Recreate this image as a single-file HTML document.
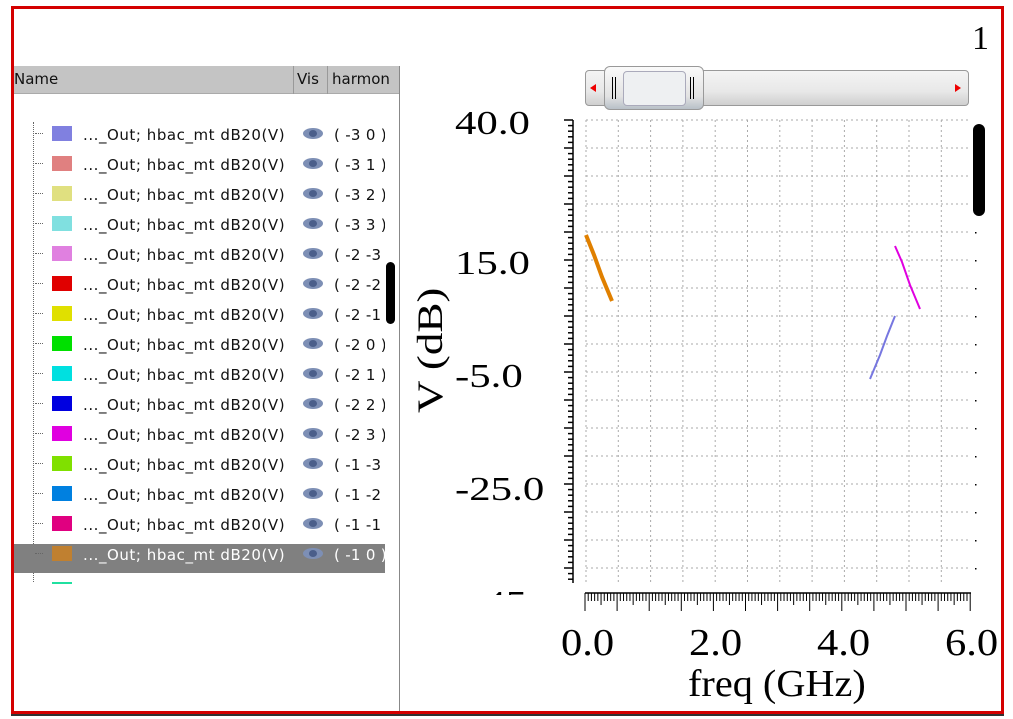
<!DOCTYPE html>
<html><head><meta charset="utf-8"><style>
*{margin:0;padding:0;box-sizing:border-box}
body{width:1013px;height:719px;background:#fff;position:relative;overflow:hidden;font-family:"DejaVu Sans","Liberation Sans",sans-serif}
.frame{position:absolute;left:11px;top:6px;width:993px;height:708px;border:3px solid #d40000;box-shadow:0 2px 0 #333}
.abs{position:absolute}
.hdr{position:absolute;left:14px;top:66px;width:385px;height:28px;background:#c4c4c4;border-bottom:1px solid #aaa;font-size:15px;color:#111}
.row{position:absolute;left:14px;width:371px;height:30px;font-size:15px;color:#111;overflow:hidden}
.sw{position:absolute;left:38px;top:7px;width:20px;height:15px}
.lb{position:absolute;left:69px;top:7px;white-space:nowrap;letter-spacing:0.55px}
.eye{position:absolute;left:289px;top:9px;width:20px;height:11px;border-radius:50%;background:#7d8fb5}
.eye:after{content:"";position:absolute;left:6px;top:2px;width:8px;height:7px;border-radius:50%;background:#4a5e8a}
.hv{position:absolute;left:320px;top:7px;white-space:nowrap;letter-spacing:0.3px}
.serif{font-family:"Liberation Serif","DejaVu Serif",serif;color:#000;position:absolute;transform-origin:left top;white-space:nowrap}
.yl{font-size:34px;transform:scaleX(1.26)}
.xl{font-size:38px;transform:scaleX(1.12)}
</style></head><body>
<div class="frame"></div>
<div class="hdr"><span class="abs" style="left:0;top:4px">Name</span><span class="abs" style="left:279px;top:0;height:28px;border-left:1px solid #999"></span><span class="abs" style="left:283px;top:4px">Vis</span><span class="abs" style="left:313px;top:0;height:28px;border-left:1px solid #999"></span><span class="abs" style="left:318px;top:4px">harmon</span></div>
<div class="abs" style="left:399px;top:66px;width:1px;height:645px;background:#888"></div>
<div class="abs" style="left:33px;top:122px;height:460px;border-left:1px dotted #666"></div>
<div class="abs" style="left:386px;top:262px;width:9px;height:62px;background:#000;border-radius:5px"></div>
<div class="abs" style="left:14px;top:544px;width:371px;height:29px;background:#808080"></div>
<div id="rows"></div>
<div class="abs" style="left:52px;top:582px;width:20px;height:2px;background:#20e0a0"></div>
<div class="abs" style="left:585px;top:70px;width:384px;height:36px;border:1px solid #999;border-radius:4px;background:linear-gradient(#f4f4f4,#e8e8e8 60%,#cfcfcf)"></div>
<div class="abs" style="left:604px;top:66px;width:100px;height:44px;border:1px solid #999;border-radius:6px;background:linear-gradient(#fafafa,#e2e2e2 70%,#b8c0c8)"></div>
<div class="abs" style="left:623px;top:71px;width:63px;height:35px;border:1px solid #aab;border-radius:4px;background:#eef0f2"></div>
<div class="abs" style="left:612px;top:77px;width:4px;height:22px;border-left:1px solid #000;border-right:1px solid #000"></div>
<div class="abs" style="left:690px;top:77px;width:4px;height:22px;border-left:1px solid #000;border-right:1px solid #000"></div>
<div class="abs" style="left:590px;top:84px;width:0;height:0;border:4px solid transparent;border-right:6px solid #e00;border-left:0"></div>
<div class="abs" style="left:955px;top:84px;width:0;height:0;border:4px solid transparent;border-left:6px solid #e00;border-right:0"></div>
<div class="serif" style="left:972px;top:20px;font-size:34px">1</div>
<div class="abs" style="left:973px;top:124px;width:12px;height:92px;background:#000;border-radius:6px"></div>
<svg class="abs" style="left:0;top:0" width="1013" height="719">
<g id="grid" stroke="#aaa" stroke-dasharray="2,3" stroke-width="1"></g>
<g id="ax" stroke="#000" stroke-width="1.5"></g>
<polyline points="586,235 594,255 602,277 612,301" stroke="#e08000" stroke-width="4" fill="none"/>
<polyline points="895,246 902,262 910,285 920,309" stroke="#e000e0" stroke-width="2" fill="none"/>
<polyline points="870,379 880,355 887,336 895,316" stroke="#7777e0" stroke-width="2" fill="none"/>
</svg>
<div class="serif yl" style="left:455px;top:105px">40.0</div>
<div class="serif yl" style="left:455px;top:245px">15.0</div>
<div class="serif yl" style="left:455px;top:358px">-5.0</div>
<div class="serif yl" style="left:455px;top:471px">-25.0</div>
<div class="abs" style="left:470px;top:589px;width:70px;height:6px;overflow:hidden"><div class="serif yl" style="left:0;top:-4px">-45.0</div></div>
<div class="serif" style="left:409px;top:413px;font-size:36px;transform:rotate(-90deg) scaleX(1.25)">V (dB)</div>
<div class="serif xl" style="left:561px;top:621px">0.0</div>
<div class="serif xl" style="left:689px;top:621px">2.0</div>
<div class="serif xl" style="left:817px;top:621px">4.0</div>
<div class="serif xl" style="left:945px;top:621px">6.0</div>
<div class="serif" style="left:688px;top:662px;font-size:38px;transform:scaleX(1.06)">freq (GHz)</div>
<script>
var c=["#8080e0","#e08080","#e0e080","#80e0e0","#e080e0","#e00000","#e0e000","#00e000","#00e0e0","#0000e0","#e000e0","#80e000","#0080e0","#e00080","#c08030"];
var h=["( -3 0 )","( -3 1 )","( -3 2 )","( -3 3 )","( -2 -3","( -2 -2","( -2 -1","( -2 0 )","( -2 1 )","( -2 2 )","( -2 3 )","( -1 -3","( -1 -2","( -1 -1","( -1 0 )"];
var s="";for(var i=0;i<15;i++){var hl=i==14;s+='<div class="row" style="top:'+(119+i*30)+'px;'+(hl?'color:#fff':'')+'"><span class="abs" style="left:21px;top:14px;width:8px;border-top:1px dotted #666"></span><div class="sw" style="background:'+c[i]+'"></div><span class="lb">..._Out; hbac_mt dB20(V)</span><div class="eye"></div><span class="hv">'+h[i]+'</span></div>'}
document.getElementById("rows").innerHTML=s;
var g="";for(var x=586;x<=972;x+=32.3)g+='<line x1="'+x+'" y1="120" x2="'+x+'" y2="582"/>';
for(var y=120;y<=582;y+=28)g+='<line x1="586" y1="'+y+'" x2="970" y2="'+y+'"/>';
document.getElementById("grid").innerHTML=g;
var a='<line x1="573" y1="120" x2="573" y2="583"/><line x1="585" y1="593" x2="971" y2="593"/>';
for(var y=120;y<=583;y+=5.6)a+='<line x1="'+(Math.round((y-120)/5.6)%5==0?564:568)+'" y1="'+y+'" x2="573" y2="'+y+'"/>';
for(var i=0;i<=120;i++){var x=585+i*3.21;a+='<line x1="'+x+'" y1="593" x2="'+x+'" y2="'+(i%10==0?611:i%5==0?605:601)+'" stroke-width="1"/>'}
for(var y=148;y<=582;y+=28)a+='<rect x="975" y="'+y+'" width="1.5" height="1.5" stroke="none" fill="#000"/>';
document.getElementById("ax").innerHTML=a;
</script>
</body></html>
